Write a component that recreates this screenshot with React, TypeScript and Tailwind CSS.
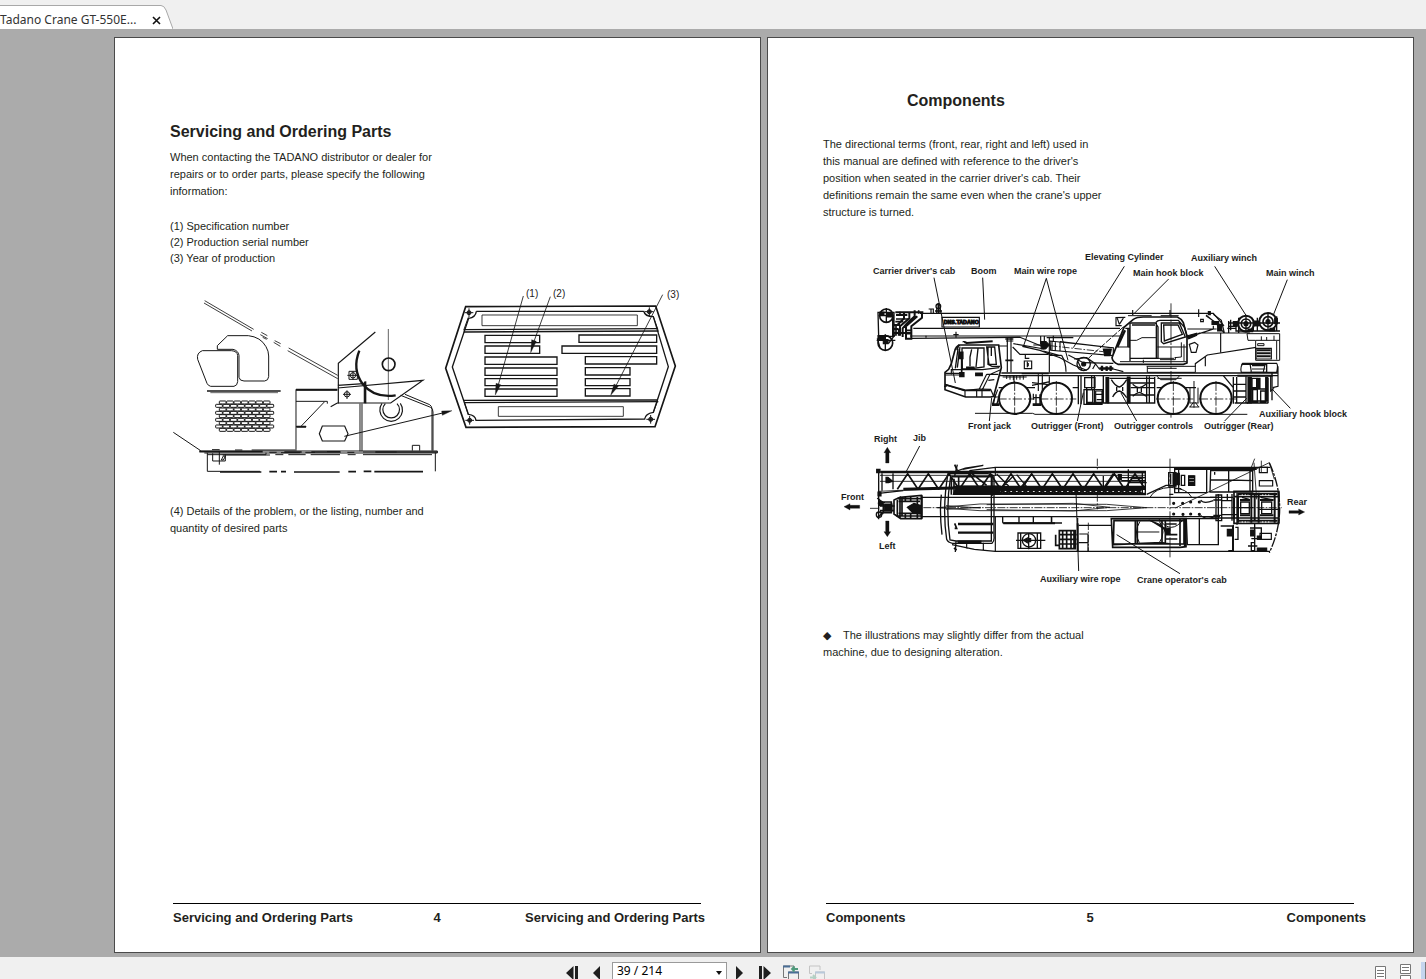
import type { ReactNode } from "react";

const brickRows = Array.from({ length: 9 }, (_, row) => {
  const wide = row % 2 === 1;
  return Array.from({ length: wide ? 8 : 7 }, (_, i) => ({
    x: (wide ? 167 : 178) + i * 22,
    y: 363 + Math.round(row * 10.3),
  }));
}).flat();

function NameplateDrawing() {
  return (
    <svg viewBox="170 280 520 210" className="mt-[14px] block h-[210px] w-[520px] max-w-full" role="img" aria-label="Nameplate location">
      <g transform="translate(160 280) scale(0.33333)" fill="none" stroke="#161616" strokeWidth="3">
        <path d="M132 69L276 153M134 62L281 148M301 164l22 12M304 157l18 10M308 172l12 6M341 187l20 12M344 182l18 9M383 212L533 296M386 204L533 286" strokeWidth="2.5" />
        <path d="M172 208V197L203 167H265Q302 171 318 200Q326 213 326 228V290Q325 302 314 303H252Q239 303 237 292V226Q235 212 219 208Z" strokeWidth="3" />
        <path d="M127 212H214Q232 213 233 227V305Q232 317 222 319H152Q144 317 141 310L113 238Q109 219 127 212Z" strokeWidth="3" />
        <path d="M141 333H362" strokeWidth="5" />
        <path d="M151 338H354" strokeWidth="2" />
        {brickRows.map((b) => (
          <rect key={`${b.x}-${b.y}`} x={b.x} y={b.y} width="20" height="9" rx="2" />
        ))}
        <path d="M40 457L122 512M408 330H532M408 328V508M408 364H502V371M493 366L424 438M408 440H439" />
        <path d="M408 329H532M409 440H438" strokeWidth="6" />
        <path d="M646 156L535 250V371M512 380L532 369M531 369H692L789 301L533 324M533 316L611 311M613 306V370" strokeWidth="3.5" />
        <path d="M616 304V370" strokeWidth="6" />
        <path d="M598 212C582 252 588 285 608 312C632 342 666 352 707 346" strokeWidth="7" />
        <circle cx="686" cy="253" r="19" strokeWidth="5" />
        <path d="M685 147V360" strokeWidth="2" />
        <circle cx="561" cy="343" r="8" />
        <path d="M549 343H573M561 331V357M567 274H592V298H567ZM562 286H597M579 274V300" />
        <circle cx="579" cy="286" r="8" />
        <path d="M666 370A34 34 0 1 0 721 370M676 371A25 25 0 1 0 711 371" strokeWidth="3.5" />
        <path d="M600 371V514M606 371V514" />
        <path d="M722 346L812 382Q819 386 819 396V512M735 343L809 374Q816 378 816 388V512" />
        <path d="M487 438H554L564 461L554 483H487L478 461Z" strokeWidth="3.5" />
        <path d="M553 469L848 399" strokeWidth="3" />
        <path d="M845 393L876 392L847 406Z" fill="#161616" strokeWidth="1" />
        <path d="M757 512V496H779V512" />
        <path d="M118 513H832V519H133M156 509H179M225 510H247M275 510H410M328 517H350M363 518H420M436 517H465M501 515H540M562 517H583M609 516H710" />
        <path d="M118 515H308M373 516H425M454 516H542M646 516H832" strokeWidth="5" />
        <path d="M142 518V574H300M826 518V574M142 524H318V518M188 525H330M346 524H370M385 524H437M452 524H540M563 524H587M609 524H816" />
        <path d="M180 576H304M328 575H351M363 575H378M402 576H539M565 575H588M611 574H634M643 575H789" strokeWidth="5" />
        <path d="M158 520V543H196V523M178 513V554M184 540L190 528L196 529L190 540Z" />
      </g>

      <g transform="translate(430 280) scale(0.33333)" fill="none" stroke="#161616" strokeWidth="3">
        <path d="M107 80L677 78L736 258L675 440L108 442L47 265Z" strokeWidth="5" />
        <path d="M139 94H641M139 94Q137 112 116 115L67 261L115 403Q136 405 138 421L644 417Q646 401 670 397L715 260L670 110Q645 110 641 93" strokeWidth="4" />
        <path d="M102 149L684 146M101 156L686 153M99 361L684 360M103 368L685 365" strokeWidth="4" />
        <path d="M115 112L101 151M670 110L684 149M115 404L103 367M670 397L682 365" />
        <path d="M156 105H622V137H156Z M205 380H580V409H205Z" strokeWidth="2.5" />
        <path d="M165 166H329V188H165ZM165 198H329V220H165ZM165 231H381V253H165ZM165 264H381V286H165ZM165 296H381V317H165ZM165 327H381V349H165ZM447 165H680V187H447ZM396 198H680V220H396ZM466 230H680V252H466ZM466 263H600V285H466ZM466 296H600V317H466ZM466 326H600V348H466Z" strokeWidth="4" />
        {[[117, 98], [658, 95], [119, 421], [662, 418]].map(([x, y]) => (
          <g key={`${x}-${y}`}>
            <circle cx={x} cy={y} r="6" fill="#444" />
            <path d={`M${x - 13} ${y}h26M${x} ${y - 13}v26`} />
          </g>
        ))}
        <path d="M280 48L202 325M361 50L308 195M698 44L554 325" strokeWidth="2.5" />
        <path d="M196 345L198 310L212 314ZM302 218L305 179L319 184ZM542 346L552 312L565 319Z" fill="#161616" strokeWidth="1" />
      </g>
      <g fontFamily='"Liberation Sans", Arial, sans-serif' fontSize="10" fill="#222">
        <text x="526" y="297">(1)</text>
        <text x="553" y="297">(2)</text>
        <text x="667" y="298">(3)</text>
      </g>
    </svg>
  );
}

const craneLabels: [string, number, number][] = [
  ["Carrier driver's cab", 873, 273],
  ["Boom", 971, 273],
  ["Main wire rope", 1014, 273],
  ["Elevating Cylinder", 1085, 259],
  ["Main hook block", 1133, 275],
  ["Auxiliary winch", 1191, 260],
  ["Main winch", 1266, 275],
  ["Auxiliary hook block", 1259, 416],
  ["Front jack", 968, 428],
  ["Outrigger (Front)", 1031, 428],
  ["Outrigger controls", 1114, 428],
  ["Outrigger (Rear)", 1204, 428],
  ["Right", 874, 441],
  ["Jib", 913, 440],
  ["Front", 841, 499],
  ["Left", 879, 548],
  ["Rear", 1287, 504],
  ["Auxiliary wire rope", 1040, 581],
  ["Crane operator's cab", 1137, 582],
];

function Wheel({ x }: { x: number }) {
  return (
    <g>
      <circle cx={x} cy="472" r="47" strokeWidth="6" fill="white" />
      <path d={`M${x - 52} 474h28m6 0h6m6 0h28m6 0h6m6 0h20M${x} 420v30m0 5v6m0 5v28m0 5v18`} strokeWidth="2.5" />
    </g>
  );
}

function SideView() {
  return (
    <g transform="translate(820 240) scale(0.33333)" fill="none" stroke="#111" strokeWidth="3.5">
      {/* boom */}
      <path d="M300 217H1180L1212 255M280 262H900M270 285H900M276 292L600 289L680 322M390 217H830" />
      <path d="M408 272V290M318 284V290M400 281H416" />
      <path d="M366 229H478V258H366Z" />
      <path d="M326 204H340V216M333 204V216M350 216V200M360 216V200" />
      <circle cx="355" cy="196" r="7" strokeWidth="4" />
      <path d="M355 186V216M345 210H366" strokeWidth="5" />
      {/* boom head and telescoping sections */}
      <path d="M174 214H222V286H176ZM218 226V284" strokeWidth="4" />
      <circle cx="199" cy="224" r="20" strokeWidth="5" />
      <circle cx="196" cy="306" r="22" strokeWidth="5" />
      <path d="M199 201V246M176 224H222M170 298H226M196 280V328M172 292L180 320M205 308L226 280" strokeWidth="4" />
      <path d="M180 213h12v10h-12zM202 218h14v10h-14zM174 284h20v12h-20zM190 296h14v12h-14z" fill="#111" />
      <path d="M226 214H310M228 222H262M306 212V230L274 256V293H258V256L292 226M284 208V226L260 248L248 262V288M268 214V232L240 256V284M252 214V232L232 252M222 252H240M222 264H236M222 276H274" strokeWidth="6" />
      <path d="M228 234H266M226 242H250M240 212V222M228 252V284M236 264V284M258 278H274M258 268H274M296 208V218" strokeWidth="5" />
      {/* carrier cab */}
      <path d="M411 328L416 312H536L544 380L521 466L512 468H437L375 446V394L386 385L394 368L404 331Q407 315 420 312" strokeWidth="5" />
      <path d="M430 304Q430 301 440 306L518 301" strokeWidth="6" />
      <path d="M426 321H492V378L447 384H427ZM414 324L406 382M420 317L412 380M450 376V348L455 325M474 323L468 378M504 317V370L516 376H540M500 318H524L529 370H507ZM514 318V345" strokeWidth="4" />
      <path d="M376 397H420M376 402H418M394 386H488L538 380M375 430L435 450V468M372 436H380M437 448L476 444L512 445L521 466M470 444V468M486 444V467M478 444L500 400M488 444L510 400L542 386M500 400H535M505 418L523 416M394 384V400" />
      <path d="M375 431L437 448H512" strokeWidth="5" />
      <path d="M417 333h12v20h-12zM419 395h13v12h-13zM467 396h20v8h-20zM440 378h22v5h-22z" fill="#111" />
      <path d="M425 353V394" strokeWidth="5" />
      {/* jacks and deck */}
      <path d="M526 460L520 491M539 461L530 491M648 460V492M660 460V492" strokeWidth="4" />
      <path d="M516 491H538M638 491H663" strokeWidth="8" />
      <path d="M521 468H536M641 470H665M640 458V476M533 446L517 490M636 425L685 431M636 433L690 422M655 400V450M667 400V450M688 406V430" />
      <path d="M544 396H1374" strokeWidth="5" />
      <path d="M540 404H1374" strokeWidth="4" />
      <path d="M548 408H620M560 402v12M570 402v14M580 402v15M590 402v14M600 402v14M610 402v14" strokeWidth="3" />
      <path d="M562 290V394M573 290V394M558 300H580M536 315H562M536 440H645M758 440H775M1010 440H1128M582 402V424" />
      <path d="M556 294H580M556 358H580" strokeWidth="5" />
      <path d="M580 308L673 324M578 318L600 340H686M607 316L660 328L720 350L760 372L800 388M616 340V352H628M613 360H635V383H613Z M622 362V379" />
      <path d="M624 366v10" strokeWidth="5" />
      <path d="M662 285V310M673 285V300M688 288V394M605 398H686" />
      {/* elevating cylinder */}
      <path d="M662 302h16l10 10l-12 12h-12z" fill="#111" />
      <path d="M690 300L880 320V344L692 328ZM696 300V328M706 302V328M720 302L872 320M640 312H680" />
      <path d="M690 314L850 332" strokeWidth="2.5" strokeDasharray="22 5 5 5" />
      <path d="M850 324h24l-4 20h-16z" fill="#111" />
      <path d="M670 330L720 344M720 302V330M680 290H760M700 284V300M688 343H725M725 343Q738 364 738 392M745 342L790 365L880 367" />
      {/* hook block sheave and winch rope */}
      <circle cx="791" cy="369" r="20" strokeWidth="4" />
      <circle cx="791" cy="369" r="6" fill="#111" />
      <path d="M762 354L800 350L826 368L838 384H880L910 392M773 360L786 388M826 370L818 384" />
      <path d="M910 258L805 352" strokeWidth="3" strokeDasharray="20 5" />
      <path d="M838 382H880M846 374V390M860 376V390M872 374V390" strokeWidth="7" />
      {/* deck equipment */}
      <path d="M775 404V490M783 404V490M794 410H825V440H794ZM800 440V486H848V446H792V490H848M815 404V444M823 404V484M850 404V486H860M826 460H848M830 476H850" strokeWidth="4" />
      <path d="M801 446H818V484H801Z M827 450H846V484H827Z" />
      <path d="M858 410H866V486H858ZM922 408H930V486H922Z" fill="#111" />
      <path d="M860 486H1004V408M980 406V486M988 406V486M868 412H1004M930 426H1004M930 462H1004M932 440H1004" strokeWidth="4" />
      <path d="M874 416Q886 436 898 438Q908 436 920 416M878 468Q886 452 898 450Q908 452 920 470M890 438V450M908 438V450M938 430Q950 440 958 440Q968 438 978 430M938 466Q948 456 958 454Q968 456 978 466M952 440V454M964 440V454" strokeWidth="4" />
      <path d="M1010 405L1022 416H1068L1078 405M1012 412H1085" strokeWidth="3" />
      <path d="M1110 440V485M1134 440V485M1108 486H1136M1110 498L1120 484M1136 498L1126 484M1108 498H1138M1122 420V500" strokeWidth="3" />
      {/* operator cab */}
      <path d="M876 350L912 259L940 235Q950 228 970 228H1072Q1084 233 1090 245L1101 286V366L1090 370H894Q878 364 876 350Z" fill="white" strokeWidth="5" />
      <path d="M916 262H928V320M932 246H1006L1014 258V352H930V318M930 246V360M936 252H1005M1009 245V350M1022 246H1078L1096 288L1031 308L1024 302V246M1031 252H1074L1087 280L1033 300ZM1008 244Q1012 238 1020 238H1075L1094 260L1102 288" strokeWidth="4" />
      <path d="M890 318H928M930 298H950L966 290H1008M1012 318H1100M970 352H1062M970 356V366M1066 348V356H1020M1084 304V348L1064 350M1092 310V360M900 362H1100M924 224H995M1022 224H1076M980 376H1126M982 382H1070M982 376V394H1126V378" strokeWidth="3" />
      <path d="M915 268L892 318" strokeWidth="7" />
      <path d="M924 262V318" strokeWidth="5" />
      <path d="M916 229L888 230V254H905M892 232L898 250M898 250L911 230M938 207V222M1050 207V225M1136 205V228M1142 235H1150V242H1142Z" strokeWidth="3.5" />
      <path d="M1053 187V230m0 6v8m0 6v48m0 6v8m0 6v52m0 6v8m0 6v140" strokeWidth="2.5" />
      {/* superstructure */}
      <path d="M1158 222L1187 246L1198 260L1212 275M1158 224L1184 242M1180 220L1204 238L1213 276M1112 286L1180 264V254M1102 264H1190M1105 292L1138 276H1290M1108 310L1124 304L1134 312L1128 334H1114ZM1202 276V334M1126 378V368L1162 342L1308 319M1156 376V346" />
      <path d="M1176 242h20v8h-20zM1193 250h12v20h-12zM1100 285l30-8v6l-24 10zM1165 212h6v9h-6z" fill="#111" />
      <path d="M1281 278H1379V358H1307V298H1284ZM1308 298H1379M1324 286V298M1340 288V298M1362 284V298M1370 300V356M1313 308H1332V314H1313Z" strokeWidth="3" />
      <path d="M1308 322H1354V354H1308Z" />
      <path d="M1310 328H1352M1310 337H1352M1310 346H1352" strokeWidth="6" />
      {/* winches */}
      <circle cx="1278" cy="248" r="24" strokeWidth="6" fill="white" />
      <circle cx="1344" cy="242" r="26" strokeWidth="6" fill="white" />
      <circle cx="1278" cy="248" r="14" strokeWidth="5" />
      <circle cx="1344" cy="242" r="15" strokeWidth="5" />
      <circle cx="1278" cy="248" r="6" fill="#111" />
      <circle cx="1344" cy="242" r="6" fill="#111" />
      <path d="M1224 246H1380M1226 240V276M1232 236V268M1248 240V268M1256 230V276M1300 236V270M1312 230V270M1370 226V270M1246 270H1380M1226 256H1252M1300 254H1322M1222 262H1250M1298 246H1330M1278 226V272M1344 218V268" strokeWidth="4" />
      <path d="M1304 240h12v14h-12zM1364 232h8v16h-8zM1240 242h12v12h-12zM1284 264h14v8h-14zM1350 262h14v8h-14z" fill="#111" />
      {/* rear outrigger and hook block */}
      <path d="M1268 367H1370Q1375 372 1370 394H1264Q1260 380 1268 367ZM1290 368L1294 392M1336 368L1330 392M1296 374H1336M1296 384H1336M1374 376V436L1358 440M1352 404V450L1362 442" />
      <path d="M1264 370H1340V394H1290M1240 430H1280M1240 408V488M1250 408V488M1278 406V486M1240 450H1280M1240 468H1280M1244 486H1284M1356 396V478M1344 410V486M1210 404L1240 440" strokeWidth="4" />
      <path d="M1284 410h10v76h-10zM1312 412h8v30h-8zM1337 410h6v70h-6z" fill="#111" />
      <path d="M1296 412H1310V440H1296ZM1298 446H1312V482H1298ZM1322 450H1336V484H1322ZM1280 486H1345M1290 444H1344M1284 480H1342" strokeWidth="4" />
      <path d="M1252 404H1358" strokeWidth="6" />
      <Wheel x={584} />
      <Wheel x={709} />
      <Wheel x={1060} />
      <Wheel x={1188} />
      <path d="M465 517H638L645 520H1282" strokeWidth="3" />
      {/* leader lines */}
      <path d="M342 110L406 426M488 110L494 236M679 112L611 314M679 112L744 358M913 76L760 320M1046 114L940 220M1184 76L1280 226M1402 116L1360 222M515 470L508 540M790 455L772 540M903 456L950 540M1280 472L1214 540M1356 444L1411 502" strokeWidth="3" />
      <text x="371" y="249" fontSize="16" fontWeight="bold" fontFamily='"Liberation Sans", sans-serif' fill="#111" strokeWidth="3">
        DNS.TADANO
      </text>
    </g>
  );
}

const jibTop = Array.from({ length: 12 }, (_, i) => {
  const x = 232 + i * 62;
  return `M${x} 190L${x + 31} 143L${x + 62} 190`;
}).join("");

const jibLace = Array.from({ length: 25 }, (_, i) => {
  const x = 540 + i * 17;
  return `M${x} 190l16 12m0 -12l-16 12`;
}).join("");

function TopView() {
  return (
    <g transform="translate(820 425) scale(0.33333)" fill="none" stroke="#111" strokeWidth="3.5">
      {/* carrier body outline */}
      <path d="M408 136L436 126L490 118M428 130L490 118M448 134L526 124H1350M396 356L463 370L526 376H1350M526 124V150M526 270V376M490 350V372M440 352V368" />
      <path d="M384 142Q366 248 380 340Q384 350 398 352H516Q524 345 522 330V150Q514 142 500 143ZM392 150Q376 248 390 342L408 345H514V150M364 206Q358 260 366 326M408 345L406 378M412 116L404 150" strokeWidth="4" />
      <path d="M414 294H520M414 320H520" strokeWidth="7" />
      <path d="M415 346H482V350H415ZM404 292L410 307H404M402 366L410 372M404 116L412 134" strokeWidth="5" />
      {/* lattice jib */}
      <path d="M182 138H978" strokeWidth="8" />
      <path d="M250 190L400 186M400 184H978" strokeWidth="9" />
      <path d={jibTop} strokeWidth="5" />
      <path d="M180 166H975M180 148H978M176 196L400 186" strokeWidth="2.5" />
      <path d="M176 132V280M186 142V194M219 142V190M176 137L390 138M176 202L250 194" strokeWidth="4" />
      <path d="M170 130h10v10h-10zM174 198h9v12h-9zM198 154h6l14 12l-12 4h-8z" fill="#111" />
      <path d="M410 180H540V205H400Z" fill="#111" />
      <path d="M396 152H520M394 156V206M402 158V204M416 152V180M452 140L500 178M516 148V210M526 204L978 205" strokeWidth="5" />
      <path d={jibLace} strokeWidth="6" />
      <path d="M526 189H976M526 203H976" strokeWidth="6" />
      <path d="M976 138V205M967 138V205M850 150V180M925 130V180M896 155H976M904 164H976M930 140H978M930 170H980M880 142L850 188M530 144L566 180M580 150L548 182M590 146L620 182M634 146L604 182" strokeWidth="4" />
      <path d="M895 146h9v16h-9zM934 153h34v5h-34z" fill="#111" />
      {/* main boom */}
      <path d="M306 214H1200M306 272H1200" fill="none" />
      <path d="M150 247H174M310 245H1385" strokeWidth="2.5" strokeDasharray="24 4 5 4" />
      <path d="M352 245L480 234L860 235L980 245L860 254H480ZM378 239L482 246M378 250L482 244M500 236L760 232L870 244L760 255L500 251" strokeWidth="2.5" />
      <path d="M240 214L304 208V278H242L222 264V222ZM222 222L240 214V278M306 208V278M292 209V277" strokeWidth="5" />
      <path d="M190 228H214V260H190ZM180 240H224M180 254H222M180 236L194 228M180 258L190 264M232 222V272M246 220V272M256 212V224M272 212V226M256 262V276M272 264V276M232 218H304M232 270H304M236 226H300M236 262H300" strokeWidth="5" />
      <path d="M262 244L282 232L302 238V264L278 260ZM194 234h22v20h-22z" fill="#111" />
      <circle cx="182" cy="232" r="7" fill="#111" />
      <circle cx="177" cy="266" r="8" strokeWidth="4" />
      <path d="M172 216L190 232M172 276L190 258" strokeWidth="5" />
      {/* engine and deck boxes */}
      <path d="M548 272V290M597 272V290M640 272V290M695 272V290M548 291H726" strokeWidth="4" />
      <path d="M550 292H705" strokeWidth="6" />
      <path d="M594 321H662V367H594ZM602 321V367M652 321V367M588 343H676M626 320V370" strokeWidth="4" />
      <circle cx="627" cy="343" r="20" strokeWidth="4" />
      <path d="M610 343l12-7v14zM626 338h6v9h-6z" fill="#111" />
      <path d="M707 326V358H720M718 314H766V368H718ZM718 326H770M718 340H770M718 354H770M728 312V370M740 312V370M753 312V370M762 312V370" strokeWidth="5" />
      <path d="M694 290V272M773 276V376M776 298H874M778 324H804V376M776 350H804" />
      <path d="M805 290V376M832 98V136M832 205V250" strokeWidth="2.5" strokeDasharray="22 5 5 5" />
      <path d="M773 292V376" strokeWidth="6" />
      {/* operator cab, plan view */}
      <path d="M874 278H1098V362L1080 364H878ZM882 284H1092V354H880ZM946 284V356M952 284V354M876 356L1024 350L1052 354M1026 284V350M1036 284V350M1080 278V360M1094 278V360" strokeWidth="5" />
      <path d="M960 286Q940 318 958 350M1018 286Q1040 318 1018 350M950 318H1018" strokeWidth="3" />
      <path d="M986 282L1020 296L1044 318M1030 305L1050 308V322H1038Z" strokeWidth="4" fill="#111" />
      <path d="M1036 294H1070M1036 326H1072M1036 339H1072" strokeWidth="5" />
      <path d="M1099 278H1195V356H1102ZM1138 280V354M1195 278V356M1202 300H1238V376H1225" strokeWidth="4" />
      <path d="M1225 375H1240" strokeWidth="6" />
      {/* turntable */}
      <path d="M990 214Q1004 186 1053 184Q1102 188 1115 214M1016 278Q1053 330 1092 278" strokeWidth="3" />
      <path d="M1050 98V154m0 6v7m0 6v65m0 6v6m0 6v60m0 6v6m0 6v60" strokeWidth="2.5" />
      <path d="M980 205L1038 178H1060M1060 138V182M1048 205H1060M1062 188H1084" strokeWidth="4" />
      <path d="M1180 224Q1150 235 1142 222M1180 275Q1154 280 1142 268" />
      {[[1061, 232], [1088, 232], [1112, 228], [1061, 264], [1089, 265], [1112, 264], [1138, 228], [1138, 265]].map(([x, y]) => (
        <circle key={`${x}-${y}`} cx={x} cy={y} r="3" fill="#111" />
      ))}
      {/* rear deck */}
      <path d="M1062 128H1310" strokeWidth="8" />
      <path d="M1064 130V200H1160V130M1076 130V200M1172 134H1298V198H1170ZM1226 134V198M1084 148H1094V178H1084ZM1172 162L1226 162L1298 164M1184 138V146M1290 134V200M1106 150H1124V178H1106ZM1046 140H1068V180H1046ZM1052 144V174M1060 144V174" strokeWidth="4" />
      <path d="M1070 142h8v34h-8zM1107 150h14v5h-14zM1107 160h14v5h-14zM1107 170h14v5h-14z" fill="#111" />
      <path d="M1066 246L1348 110L1363 160M1302 110L1310 220M1324 104V140M1294 124L1304 98" strokeWidth="2.5" />
      <path d="M1348 110Q1410 248 1348 380" strokeWidth="4" strokeDasharray="30 4 8 4" />
      <path d="M1318 164H1358V180H1318ZM1318 124H1342V140H1318ZM1320 322H1354V340H1320Z" />
      {/* winch assembly */}
      <path d="M1188 207H1205V284H1188ZM1195 204V286M1170 214H1204M1172 276H1204M1180 222H1204M1180 268H1204M1205 214H1240M1205 224H1236M1205 266H1250M1205 276H1240M1222 204V226M1236 204V284M1251 200V296" strokeWidth="4" />
      <path d="M1242 196H1376V212H1242ZM1242 276H1376V292H1242Z" strokeWidth="5" />
      <path d="M1252 204H1372M1252 284H1372M1254 208V290M1294 200V290M1316 200V290M1364 200V290M1376 196V292M1260 222H1290M1260 268H1290M1320 222H1360M1320 268H1360M1304 204V284M1242 214V280" strokeWidth="6" />
      <path d="M1262 228H1288V263H1262ZM1325 228H1355V263H1325ZM1266 214L1288 220M1322 214L1360 222M1256 245H1300M1316 250H1376" strokeWidth="4" />
      <path d="M1265 207H1285M1326 207H1352M1265 288H1285M1326 288H1352" stroke="white" strokeWidth="3" strokeDasharray="4 5" />
      <path d="M1222 310h18v20h-18zM1292 312h12v18h-12zM1312 330h12v10h-12zM1312 366h28v9h-28z" fill="#111" />
      <path d="M1240 296V376M1246 304H1254V340H1244M1290 306H1326M1324 338H1294M1294 350H1304V374H1294ZM1284 360H1312M1324 304V340M1304 292V350" strokeWidth="4" />
      {/* direction arrows */}
      <path d="M202 64L212 80H207V111H197V80H192ZM202 332L192 317H197V285H207V317H212ZM72 242L90 233V238H119V247H90V252ZM1454 258L1436 249V254H1407V262H1436V267Z" fill="#111" strokeWidth="1" />
      <path d="M299 60L258 138M768 196L776 435M890 326L1080 443" strokeWidth="3" />
    </g>
  );
}

function CraneDrawing() {
  return (
    <svg viewBox="823 240 540 350" className="mt-[20px] block h-[350px] w-[540px] max-w-full" role="img" aria-label="Crane components">
      <SideView />
      <TopView />
      <g fontFamily='"Liberation Sans", Arial, sans-serif' fontWeight="bold" fontSize="9" fill="#1c1c1c">
        {craneLabels.map(([label, x, y]) => (
          <text key={label} x={x} y={y}>
            {label}
          </text>
        ))}
      </g>
    </svg>
  );
}

function Page({ children, title, number }: { children: ReactNode; title: string; number: number }) {
  return (
    <article className="flex min-w-0 flex-1 flex-col border border-[#4a4a4a] bg-white pl-[55px] text-[11px] leading-[17px] text-[#231f20]">
      {children}
      <footer className="mt-auto mr-[59px] mb-6 ml-[3px] grid grid-cols-[1fr_auto_1fr] border-t border-black pt-1 text-[13px] leading-[20px] font-bold whitespace-nowrap">
        <span>{title}</span>
        <span>{number}</span>
        <span className={number % 2 ? "-mr-3 text-right" : "-mr-1 text-right"}>{title}</span>
      </footer>
    </article>
  );
}

const iconButton = "flex h-[22px] items-center justify-center text-[#1f1f1f]";

export default function App() {
  return (
    <div className="flex h-screen min-h-[600px] flex-col overflow-hidden bg-[#ababab] font-['Liberation_Sans',Arial,sans-serif]">
      <header className="flex h-[29px] shrink-0 items-end bg-[#f0f0f0]">
        <div className="flex h-[24px] items-center border-t border-[#a8a8a8] bg-white font-['Noto_Sans',sans-serif] text-[12px] text-[#333]">
          <span className="w-[152px] pt-1 whitespace-nowrap">Tadano Crane GT-550E...</span>
          <button type="button" aria-label="Close tab" className="flex h-4 w-[9px] items-center">
            <svg viewBox="0 0 9 9" className="mt-[6px] h-[9px] w-[9px]" fill="none" stroke="#111" strokeWidth="1.6">
              <path d="M1 1L8 8M8 1L1 8" />
            </svg>
          </button>
        </div>
        <svg viewBox="0 0 12 24" className="h-[24px] w-3">
          <path d="M0 0.500Q3 0.500 5 5L12 24H0Z" fill="#fff" />
          <path d="M0 0.500Q3 0.500 5 5L12 24" fill="none" stroke="#a8a8a8" />
        </svg>
      </header>

      <main className="flex min-h-0 flex-1 gap-[6px] pt-2 pr-3 pb-1 pl-[114px]">
        <Page title="Servicing and Ordering Parts" number={4}>
          <h1 className="mt-[83px] text-[16px] leading-[22px] font-bold">Servicing and Ordering Parts</h1>
          <p className="mt-[6px]">
            When contacting the TADANO distributor or dealer for
            <br />
            repairs or to order parts, please specify the following
            <br />
            information:
          </p>
          <ol className="mt-[18px] leading-[16px]">
            <li>(1) Specification number</li>
            <li>(2) Production serial number</li>
            <li>(3) Year of production</li>
          </ol>
          <NameplateDrawing />
          <p className="mt-[13px]">
            (4) Details of the problem, or the listing, number and
            <br />
            quantity of desired parts
          </p>
        </Page>

        <Page title="Components" number={5}>
          <h2 className="mt-[52px] ml-[84px] text-[16px] leading-[22px] font-bold">Components</h2>
          <p className="mt-6">
            The directional terms (front, rear, right and left) used in
            <br />
            this manual are defined with reference to the driver's
            <br />
            position when seated in the carrier driver's cab. Their
            <br />
            definitions remain the same even when the crane's upper
            <br />
            structure is turned.
          </p>
          <CraneDrawing />
          <p className="mt-9">
            <span className="inline-block w-5">◆</span>The illustrations may slightly differ from the actual
            <br />
            machine, due to designing alteration.
          </p>
        </Page>
      </main>

      <footer className="flex h-[22px] shrink-0 items-start overflow-hidden bg-[#f0f0f0] pt-[5px]">
        <div className="flex flex-1 items-center justify-center pl-4">
          <button type="button" aria-label="First page" className={`${iconButton} w-3`}>
            <svg viewBox="0 0 12 14" className="h-[14px] w-3" fill="currentColor">
              <path d="M7.500 0V14L0 7ZM9 0L12 0V14H9Z" />
            </svg>
          </button>
          <button type="button" aria-label="Previous page" className={`${iconButton} ml-[15px] w-[7px]`}>
            <svg viewBox="0 0 7 14" className="h-[14px] w-[7px]" fill="currentColor">
              <path d="M7 0V14L0 7Z" />
            </svg>
          </button>
          <label className="relative ml-3 block">
            <span className="sr-only">Page</span>
            <select defaultValue="39" className="block h-[22px] w-[115px] appearance-none border border-[#9a9a9a] bg-white pb-[5px] pl-1 font-['Noto_Sans',sans-serif] text-[12px] leading-[15px] text-black">
              <option value="39">39 / 214</option>
            </select>
            <svg viewBox="0 0 6 4" className="pointer-events-none absolute top-[9px] right-[5px] h-1 w-[6px]">
              <path d="M0 0H6L3 4Z" fill="#111" />
            </svg>
          </label>
          <button type="button" aria-label="Next page" className={`${iconButton} ml-[9px] w-[7px]`}>
            <svg viewBox="0 0 7 14" className="h-[14px] w-[7px]" fill="currentColor">
              <path d="M0 0V14L7 7Z" />
            </svg>
          </button>
          <button type="button" aria-label="Last page" className={`${iconButton} ml-4 w-3`}>
            <svg viewBox="0 0 12 14" className="h-[14px] w-3" fill="currentColor">
              <path d="M4.500 0V14L12 7ZM0 0H3V14H0Z" />
            </svg>
          </button>
          <button type="button" aria-label="Previous view" className={`${iconButton} ml-3 w-4`}>
            <svg viewBox="0 0 16 16" className="h-4 w-4" fill="none">
              <path d="M4 12.500H0.500V1H11V3M5.500 7H15.500V16H5.500Z" stroke="#777" />
              <path d="M0 1.500H7M5 7.500H16" stroke="#4a6e96" strokeWidth="2" />
              <path d="M15 4H9M11.500 1.500L9 4L11.500 6.500" stroke="#4f9a7c" strokeWidth="1.800" />
            </svg>
          </button>
          <button type="button" aria-label="Next view" disabled className={`${iconButton} ml-[10px] w-4`}>
            <svg viewBox="0 0 16 16" className="h-4 w-4" fill="none">
              <path d="M3 8.500H0.500V1H11V5M6.500 7H15.500V16H6.500Z" stroke="#c4c4c4" />
              <path d="M6 7.500H16" stroke="#b8c9da" strokeWidth="2" />
              <path d="M1 12.500H6M4 10L6.500 12.500L4 15" stroke="#b3d0c4" strokeWidth="1.800" />
            </svg>
          </button>
        </div>
        <div className="flex items-center gap-[14px]">
          <button type="button" aria-label="Single page" className={`${iconButton} w-[11px]`}>
            <svg viewBox="0 0 11 14" className="h-[14px] w-[11px]" fill="#fff" stroke="#777">
              <path d="M0.500 0.500H10.500V13.500H0.500ZM2 4.500H9M2 7.500H9M2 10.500H9" />
            </svg>
          </button>
          <button type="button" aria-label="Continuous" className={`${iconButton} w-[11px]`}>
            <svg viewBox="0 0 11 18" className="h-[18px] w-[11px]" fill="#fff" stroke="#777">
              <path d="M0.500 0.500H10.500V9.500H0.500ZM2 3.500H9M2 6.500H9M0.500 11.500H10.500V17.500H0.500Z" />
            </svg>
          </button>
          <button type="button" aria-label="Facing pages" className="-ml-1 h-[22px] w-[5px] border-r border-[#777] bg-[#c5d5ee]" />
        </div>
      </footer>
    </div>
  );
}
